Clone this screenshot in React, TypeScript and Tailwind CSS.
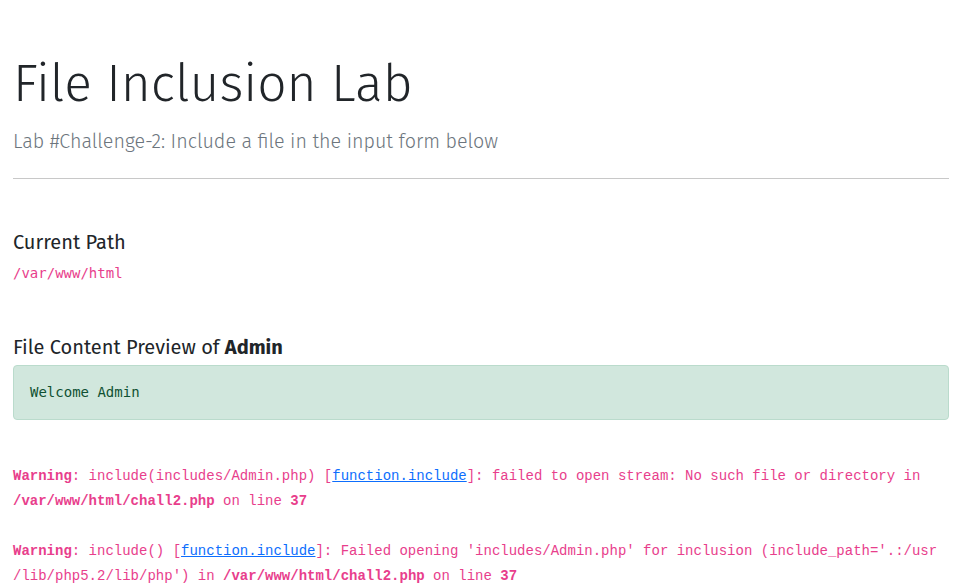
import React from "react";

export default function App() {
  const mono = { fontFamily: '"Liberation Mono", monospace' };
  return (
    <div className="min-h-[586px] bg-white pl-[13px] pr-[11px] pt-[54px] text-[#212529]" style={{ fontFamily: '"Fira Sans", Lato, "Noto Sans", sans-serif' }}>
      <h1 className="text-[51.5px] font-light leading-[1.2] text-[#212529]">File Inclusion Lab</h1>
      <p className="mt-[11px] text-[19.7px] font-light leading-[1.5] text-[#6c757d]">Lab #Challenge-2: Include a file in the input form below</p>
      <hr className="mt-[22px] border-t border-[#c8c8c8]" />
      <h4 className="mt-[51px] text-[20px] font-normal leading-[1.2] text-[#212529]">Current Path</h4>
      <code className="mt-[9px] block text-[14px] leading-[1.5] text-[#e83e8c]" style={{ fontFamily: '"DejaVu Sans Mono", monospace' }}>/var/www/html</code>
      <h4 className="mt-[51px] text-[20px] font-normal leading-[1.2] text-[#212529]">File Content Preview of <b className="font-bold">Admin</b></h4>
      <div className="mt-[6px] rounded-[4px] border border-[#badbcc] bg-[#d1e7dd] px-[16px] pt-[16px] pb-[16px] text-[14px] leading-[21px] text-[#0f5132]" style={{ fontFamily: '"DejaVu Sans Mono", monospace' }}>
        Welcome Admin
      </div>
      <div className="mt-[44px] text-[14px] leading-[25px] text-[#e83e8c]" style={mono}>
        <div>
          <b>Warning</b>: include(includes/Admin.php) [<a className="text-[#0d6efd] underline" href="#">function.include</a>]: failed to open stream: No such file or directory in <b>/var/www/html/chall2.php</b> on line <b>37</b>
        </div>
        <div className="h-[25px]" />
        <div>
          <b>Warning</b>: include() [<a className="text-[#0d6efd] underline" href="#">function.include</a>]: Failed opening 'includes/Admin.php' for inclusion (include_path='.:/usr<wbr />/lib/php5.2/lib/php') in <b>/var/www/html/chall2.php</b> on line <b>37</b>
        </div>
      </div>
    </div>
  );
}
